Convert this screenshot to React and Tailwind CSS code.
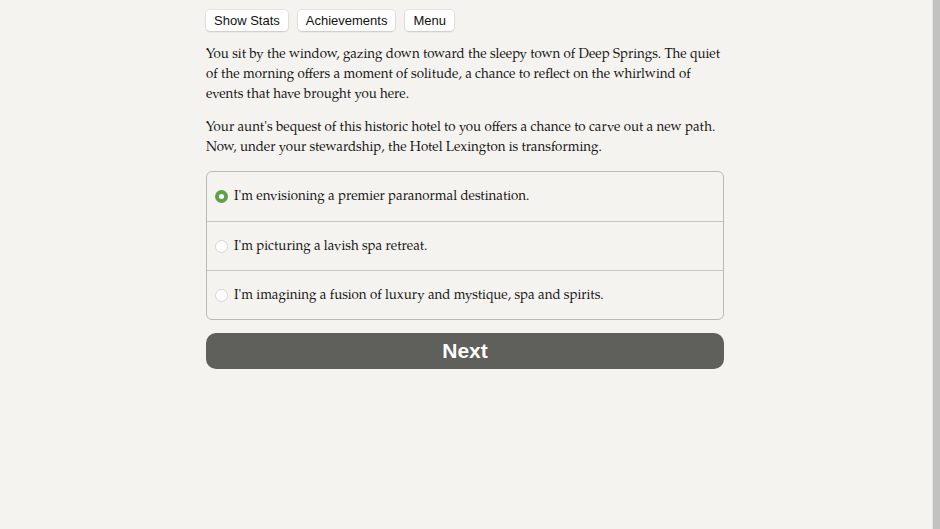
const choices = [
  "I'm envisioning a premier paranormal destination.",
  "I'm picturing a lavish spa retreat.",
  "I'm imagining a fusion of luxury and mystique, spa and spirits.",
];

const NavButton = ({ children }) => (
  <button className="h-[21px] px-[8px] rounded-[4px] bg-white text-[13px] leading-none text-[#111] shadow-[0_0_0_1px_rgba(0,0,0,0.06),0_1px_2px_rgba(0,0,0,0.12)]">
    {children}
  </button>
);

export default function App() {
  const selected = 0;

  return (
    <div className="flex min-h-[529px] bg-[#f4f3ef]">
      <div className="flex-1 flex justify-center pt-[10px] pr-[2px]">
        <div className="w-[518px]">
          <div className="flex gap-[10px] font-['Liberation_Sans',Arial,sans-serif]">
            <NavButton>Show Stats</NavButton>
            <NavButton>Achievements</NavButton>
            <NavButton>Menu</NavButton>
          </div>

          <div className="mt-[14px] font-['TeX_Gyre_Pagella','Palatino_Linotype',Palatino,'Liberation_Serif',serif] text-[13.3px] leading-[20px] text-[#141414]">
            <p>
              You sit by the window, gazing down toward the sleepy town of Deep Springs. The quiet of the
              morning offers a moment of solitude, a chance to reflect on the whirlwind of events that have
              brought you here.
            </p>
            <p className="mt-[13px]">
              Your aunt's bequest of this historic hotel to you offers a chance to carve out a new path.
              Now, under your stewardship, the Hotel Lexington is transforming.
            </p>

            <div className="mt-[13px] rounded-[6px] border border-[#b9b9b6] overflow-hidden">
              {choices.map((text, i) => (
                <label
                  key={i}
                  className={`flex items-center h-[49px] pl-[8px] gap-[6px] ${i > 0 ? 'border-t border-[#c4c4c1]' : ''}`}
                >
                  {i === selected ? (
                    <span className="w-[13px] h-[13px] rounded-full bg-[#5fa14a] flex items-center justify-center">
                      <span className="w-[5px] h-[5px] rounded-full bg-white" />
                    </span>
                  ) : (
                    <span className="w-[13px] h-[13px] rounded-full bg-white border border-[#d6d6d3]" />
                  )}
                  <span className="pt-[1px]">{text}</span>
                </label>
              ))}
            </div>
          </div>

          <button className="mt-[13px] w-full h-[36px] rounded-[10px] bg-[#5f5f5c] text-white font-['Liberation_Sans',Arial,sans-serif] font-bold text-[21px]">
            Next
          </button>
        </div>
      </div>
      <div className="w-[8px] bg-[#c2c2c0] border-l border-[#e4e4e2]" />
    </div>
  );
}
